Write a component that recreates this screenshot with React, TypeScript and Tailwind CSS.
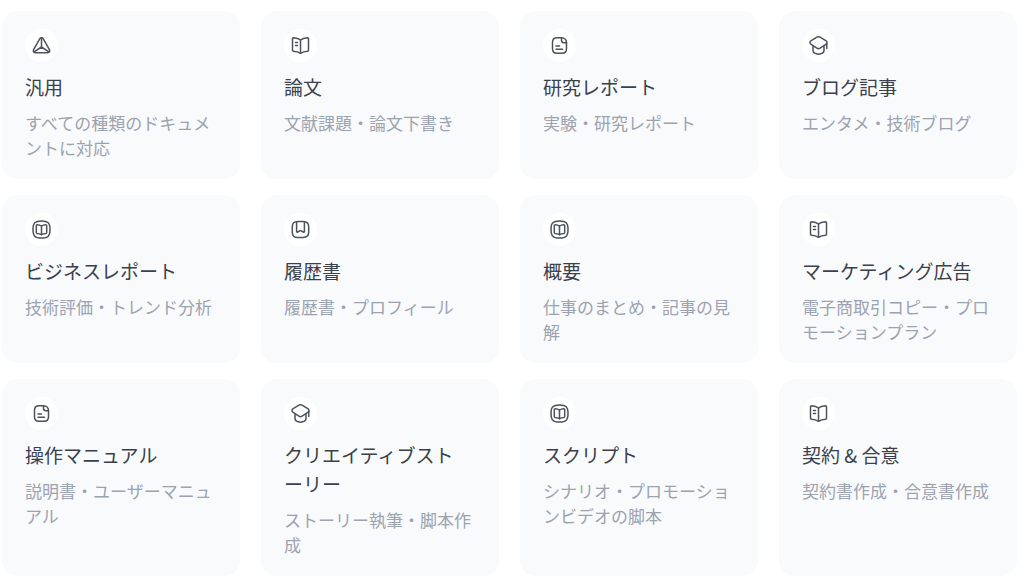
import type { ReactNode } from "react";

type IconName = "prism" | "book" | "document" | "cap" | "library" | "bookmark";

const iconShapes: Record<IconName, ReactNode> = {
  prism: (
    <>
      <path d="M7.7 2.9 1.6 13.6C.8 15.1 1.6 16.7 3.3 16.7h12.4c1.700 0 2.500-1.600 1.700-3.100L11.300 2.900c-.8-1.400-2.800-1.400-3.600 0Z" />
      <path d="M9.500 2v9M9.500 11l-7.400 4.800M9.500 11l7.400 4.800" />
    </>
  ),
  book: (
    <>
      <path d="M9.500 4C7.700 2.600 5.400 2 2.600 1.800c-.7 0-1.100.4-1.100 1v11.400c0 .6.400 1 1 1.100 2.700.2 5 .8 7 2 2-1.200 4.300-1.800 7-2 .6-.1 1-.5 1-1.100V2.800c0-.6-.4-1-1.100-1C13.600 2 11.300 2.600 9.500 4Z" />
      <path d="M9.500 4v13.300" />
      <path d="M4.500 6.500h2M4.500 9.500h2" />
    </>
  ),
  document: (
    <>
      <path d="M11.500 1.700H7c-3 0-4.500 1.500-4.500 4.500v6.600c0 3 1.500 4.500 4.500 4.500h5c3 0 4.500-1.500 4.500-4.500V6.700" />
      <path d="M11.500 1.700v2.500c0 1.700.8 2.500 2.500 2.500h2.500c0-2.800-2.200-5-5-5Z" />
      <path d="M6 10h3.500M6 13.300h6.500" />
    </>
  ),
  cap: (
    <>
      <path d="M8 1.200 2.200 4.600c-1.600 1-1.600 2.800 0 3.800l5.700 3.700c1 .7 2.200.7 3.200 0l5.700-3.700c1.600-1 1.600-2.800 0-3.800L11 1.200c-1-.6-2-.6-3 0Z" />
      <path d="M4 10v4.800c0 1.100.8 2 1.900 2.400l2.500.8c.7.200 1.500.2 2.200 0l2.500-.8c1.100-.4 1.900-1.300 1.900-2.400V10" />
      <path d="M17.800 7.500v5" />
    </>
  ),
  library: (
    <>
      <path d="M9.500 1c6.500 0 8.500 2 8.500 8.500S16 18 9.500 18 1 16 1 9.500 3 1 9.500 1Z" />
      <path d="M9.500 6C8.300 5.200 6.900 4.800 5.200 4.700c-.5 0-.9.300-.9.800v7.100c0 .5.300.8.800.9 1.600.1 3 .4 4.400 1.200 1.400-.8 2.800-1.100 4.400-1.200.5-.1.800-.4.800-.9V5.500c0-.5-.4-.8-.9-.8-1.700.1-3.100.5-4.300 1.300Z" />
      <path d="M9.500 6v8.700" />
    </>
  ),
  bookmark: (
    <>
      <path d="M6.800 1.500h5.400c3.800 0 5.500 1.700 5.500 5.400v5.200c0 3.700-1.700 5.400-5.500 5.400H6.800c-3.800 0-5.500-1.700-5.500-5.400V6.900c0-3.700 1.700-5.400 5.500-5.400Z" />
      <path d="M5.600 1.700v9.700c0 .7.600.9 1.100.6l2-1.200c.5-.3 1.100-.3 1.600 0l2 1.200c.5.300 1.100.1 1.100-.6V1.700" />
    </>
  ),
};

const templates: { icon: IconName; title: string; description: string }[] = [
  { icon: "prism", title: "汎用", description: "すべての種類のドキュメントに対応" },
  { icon: "book", title: "論文", description: "文献課題・論文下書き" },
  { icon: "document", title: "研究レポート", description: "実験・研究レポート" },
  { icon: "cap", title: "ブログ記事", description: "エンタメ・技術ブログ" },
  { icon: "library", title: "ビジネスレポート", description: "技術評価・トレンド分析" },
  { icon: "bookmark", title: "履歴書", description: "履歴書・プロフィール" },
  { icon: "library", title: "概要", description: "仕事のまとめ・記事の見解" },
  { icon: "book", title: "マーケティング広告", description: "電子商取引コピー・プロモーションプラン" },
  { icon: "document", title: "操作マニュアル", description: "説明書・ユーザーマニュアル" },
  { icon: "cap", title: "クリエイティブストーリー", description: "ストーリー執筆・脚本作成" },
  { icon: "library", title: "スクリプト", description: "シナリオ・プロモーションビデオの脚本" },
  { icon: "book", title: "契約 & 合意", description: "契約書作成・合意書作成" },
];

function TemplateIcon({ name }: { name: IconName }) {
  return (
    <span className="mb-2.5 flex size-[33px] items-center justify-center rounded-full bg-white text-[#4b525c]">
      <svg
        className="size-[19px]"
        viewBox="0 0 19 19"
        fill="none"
        stroke="currentColor"
        strokeWidth="1.5"
        strokeLinecap="round"
        strokeLinejoin="round"
        aria-hidden="true"
      >
        {iconShapes[name]}
      </svg>
    </span>
  );
}

export default function App() {
  return (
    <main
      lang="ja"
      className="bg-white pt-[11px] pr-[7px] pb-3 pl-0.5 font-['Noto_Sans_CJK_JP',sans-serif]"
    >
      <ul className="grid grid-cols-4 gap-x-[21px] gap-y-4">
        {templates.map(({ icon, title, description }) => (
          <li key={title} className="flex">
            <button
              type="button"
              className="flex w-full cursor-pointer flex-col items-start rounded-2xl bg-[#f9fafc] pt-[18px] pr-[27px] pb-[19px] pl-[23px] text-left"
            >
              <TemplateIcon name={icon} />
              <span className="mb-[9px] text-[19px] leading-[29px] break-all text-[#3a414b]">{title}</span>
              <span className="text-[17px] leading-[25px] break-all text-[#9ca3af]">{description}</span>
            </button>
          </li>
        ))}
      </ul>
    </main>
  );
}
